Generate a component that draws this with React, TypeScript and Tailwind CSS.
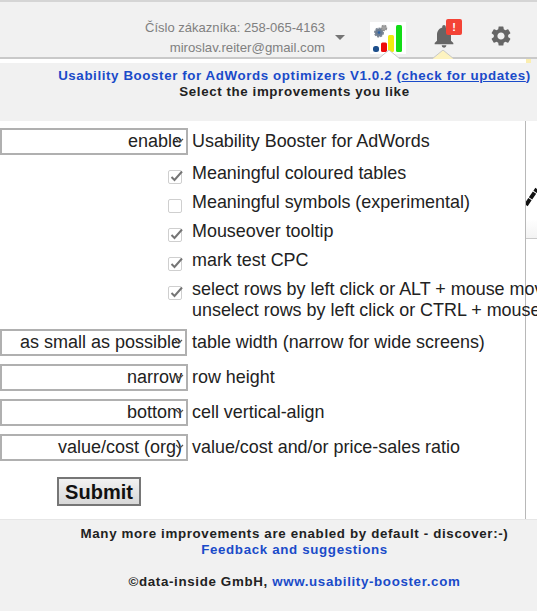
import type { ReactNode } from 'react';
import { MdNotifications, MdSettings } from 'react-icons/md';

const blue = 'text-[#1a4bc9]';

const Arrow = ({ color, x }: { color: string; x: string }) => (
  <svg className={`absolute top-[50px] ${x}`} width="22" height="9" viewBox="0 0 22 9">
    <path d="M0 9 L11 0 L22 9" fill={color} stroke="#c9c9c9" strokeWidth="1" />
  </svg>
);

const Logo = () => (
  <svg width="36" height="32" viewBox="0 0 36 32" className="bg-white">
    <circle cx="9" cy="10.5" r="4" fill="#6b7c92" stroke="#7d8794" strokeWidth="2" strokeDasharray="2 1" />
    <circle cx="9" cy="10.5" r="1.3" fill="#2a62a8" />
    <circle cx="14" cy="6" r="2.5" fill="#a3a3a3" stroke="#8f8f8f" strokeWidth="1.5" strokeDasharray="2 1" />
    <rect x="3" y="24" width="6" height="6" rx="2.5" fill="#1d4f8c" />
    <rect x="11" y="20.5" width="6" height="9.5" rx="1.5" fill="#ee0b0b" />
    <rect x="18" y="13" width="6" height="17" rx="1.5" fill="#f1ea10" />
    <rect x="26" y="3" width="6" height="27" rx="1.5" fill="#12dc16" />
  </svg>
);

const Select = ({ value, width }: { value: string; width: string }) => (
  <div className={`relative h-[27px] ${width} shrink-0 border-2 border-[#b0b0b0] bg-white pr-[4px] text-right leading-[23px] text-[18px] text-[#222]`}>
    {value}
    <svg className="absolute right-[2px] top-[8px]" width="9" height="6" viewBox="0 0 9 6">
      <path d="M1 1 L4.5 4.5 L8 1" fill="none" stroke="#555" strokeWidth="1.2" />
    </svg>
  </div>
);

const SelectRow = ({ value, label, width = 'w-[188px]' }: { value: string; label: string; width?: string }) => (
  <div className="flex h-[35px] items-start whitespace-nowrap">
    <Select value={value} width={width} />
    <span className={`${width === 'w-[187px]' ? 'ml-[5px]' : 'ml-[4px]'} leading-[26px]`}>{label}</span>
  </div>
);

const CheckRow = ({ checked = true, children }: { checked?: boolean; children: ReactNode }) => (
  <div className="flex min-h-[29px] items-start whitespace-nowrap pl-[168px]">
    <span className="relative mt-[8px] h-[14px] w-[14px] shrink-0 rounded-[2px] border border-[#cfcfcf] bg-white">
      {checked && (
        <svg className="absolute left-[0px] top-[-2px]" width="15" height="14" viewBox="0 0 15 14">
          <path d="M2.5 8 L5.5 11 L13 2.5" fill="none" stroke="#757575" strokeWidth="2" />
        </svg>
      )}
    </span>
    <span className="ml-[10px] leading-[21px] pt-[1px]">{children}</span>
  </div>
);

export default function App() {
  return (
    <div className="relative flex h-[613px] w-[537px] flex-col overflow-hidden bg-[#f1f1f1] font-['Liberation_Sans',Arial,sans-serif]">
      {/* barra superior de AdWords */}
      <header className="flex h-[59px] shrink-0 items-start border-t-2 border-b-2 border-t-[#d5d5d5] border-b-[#c9c9c9] pt-[17px] pl-[137px]">
        <div className="w-[188px] text-right text-[#808080]">
          <p className="text-[13px] leading-[18px] whitespace-nowrap">Číslo zákazníka: 258-065-4163</p>
          <p className="mt-[2px] text-[13.2px] leading-[18px] whitespace-nowrap">miroslav.reiter@gmail.com</p>
        </div>
        <div className="ml-[10px] mt-[16px] h-0 w-0 border-x-[5.5px] border-t-[5px] border-x-transparent border-t-[#757575]" />
        <div className="ml-[25px] mt-[3px]">
          <Logo />
        </div>
        <div className="relative ml-[24px] mt-[3px]">
          <MdNotifications size={28} color="#666" />
          <span className="absolute left-[16px] top-[-3px] flex h-[16px] w-[16px] items-center justify-center rounded-[2px] bg-[#f44336] text-[11px] font-bold leading-none text-white">!</span>
        </div>
        <div className="ml-[31px] mt-[5px]">
          <MdSettings size={24} color="#666" />
        </div>
      </header>
      <Arrow color="#ffffff" x="left-[378px]" />
      <Arrow color="#fdf3c0" x="left-[432px]" />

      {/* cabecera del popup */}
      <div className="h-[62px] shrink-0">
        <div className="flex h-[4px]">
          <span className="w-[526px] bg-white" />
          <span className="w-[5px] bg-[#fbeeb0]" />
        </div>
        <div className="w-[589px] pt-[5px] text-center text-[13.33px] font-bold leading-[16px] tracking-[0.6px] whitespace-nowrap text-[#222]">
          <p className={blue}>
            Usability Booster for AdWords optimizers V1.0.2 (<a className="underline">check for updates</a>)
          </p>
          <p>Select the improvements you like</p>
        </div>
      </div>

      {/* opciones */}
      <main className="flex h-[398px] shrink-0 bg-white text-[17.93px] text-[#222]">
        <div className="w-[526px] shrink-0 border-r border-[#b8b8b8] pt-[7px]">
          <div className="flex h-[34px] items-start whitespace-nowrap">
            <Select value="enable" width="w-[188px]" />
            <span className="ml-[4px] leading-[26px]">Usability Booster for AdWords</span>
          </div>
          <CheckRow>Meaningful coloured tables</CheckRow>
          <CheckRow checked={false}>Meaningful symbols (experimental)</CheckRow>
          <CheckRow>Mouseover tooltip</CheckRow>
          <CheckRow>mark test CPC</CheckRow>
          <CheckRow>
            select rows by left click or ALT + mouse move
            <br />
            unselect rows by left click or CTRL + mouse move
          </CheckRow>
          <div className="h-[8px]" />
          <SelectRow value="as small as possible" label="table width (narrow for wide screens)" width="w-[187px]" />
          <SelectRow value="narrow" label="row height" />
          <SelectRow value="bottom" label="cell vertical-align" />
          <SelectRow value="value/cost (org)" label="value/cost and/or price-sales ratio" />
          <button className="ml-[57px] mt-[8px] h-[29px] w-[84px] border-2 border-[#767676] bg-gradient-to-b from-[#f2f2f2] to-[#d8d8d8] text-[20px] font-bold leading-none text-[#111]">
            Submit
          </button>
        </div>
        <div className="flex-1">
          <svg className="mt-[66px]" width="11" height="20" viewBox="0 0 11 20">
            <path d="M0 18 L11 2" stroke="#111" strokeWidth="4" strokeDasharray="7 1" />
          </svg>
          <div className="mt-[12px] h-[20px] border-b border-[#c9c9c9] bg-gradient-to-b from-white to-[#f3f3f3]" />
        </div>
      </main>

      {/* pie */}
      <footer className="h-[92px] w-[589px] shrink-0 border-t border-[#e6e6e6] pt-[6px] text-center text-[13.33px] font-bold leading-[16px] tracking-[0.65px] whitespace-nowrap text-[#222]">
        <p>Many more improvements are enabled by default - discover:-)</p>
        <p className={blue}>Feedback and suggestions</p>
        <p className="mt-[16px]">
          ©data-inside GmbH, <a className={blue}>www.usability-booster.com</a>
        </p>
      </footer>
      <div className="h-[2px] bg-white" />
    </div>
  );
}
